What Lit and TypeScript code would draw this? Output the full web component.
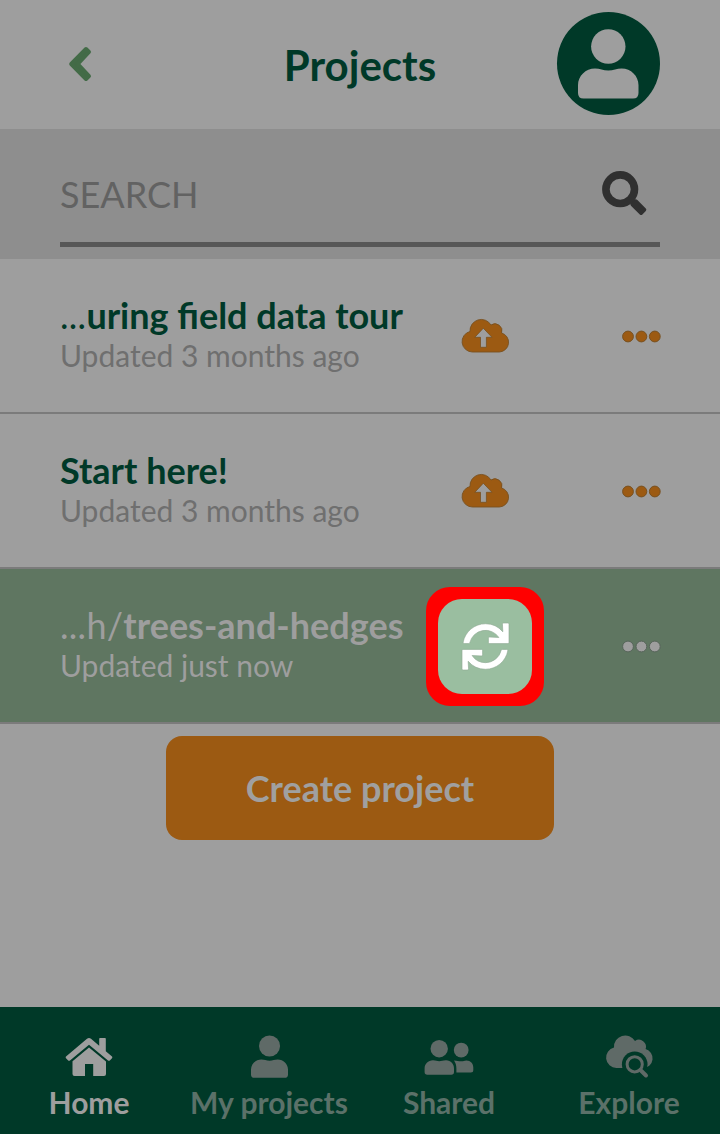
import { LitElement, html, css, svg, nothing } from "lit";
import { customElement } from "lit/decorators.js";
import { classMap } from "lit/directives/class-map.js";

interface Project {
  lead: string;
  name: string;
  updated: string;
  syncing: boolean;
}

const projects: Project[] = [
  { lead: "...", name: "uring field data tour", updated: "Updated 3 months ago", syncing: false },
  { lead: "", name: "Start here!", updated: "Updated 3 months ago", syncing: false },
  { lead: "...h/", name: "trees-and-hedges", updated: "Updated just now", syncing: true },
];

const cloud =
  "M10.4 33A10.4 10.4 0 0 1 8 12.5A11.3 11.3 0 0 1 29 6A7 7 0 0 1 39.6 14A9.7 9.7 0 0 1 37.4 33Z";

const person = svg`
  <circle cx="30.3" cy="17.5" r="17.2"></circle>
  <path d="M17 39.5C22 39.5 25 41.5 30.3 41.5S38.6 39.5 43.6 39.5C53 39.5 60.5 47 60.5 56V64Q60.5 69.5 55 69.5H5.5Q0 69.5 0 64V56C0 47 7.6 39.5 17 39.5Z"></path>`;

@customElement("app-root")
export class AppRoot extends LitElement {
  static styles = css`
    :host {
      display: flex;
      flex-direction: column;
      width: 720px;
      height: 1134px;
      overflow: hidden;
      background: #9e9e9e;
      color: #003928;
      font-family: Lato, sans-serif;
    }
    * { box-sizing: border-box; }
    svg { display: block; overflow: visible; }
    button { border: 0; padding: 0; background: none; font: inherit; color: inherit; }
    header {
      height: 129px;
      padding: 0 60px;
      display: grid;
      grid-template-columns: 104px 1fr 104px;
      align-items: center;
    }
    .back { padding: 0 0 1px 9px; color: #436b47; justify-self: start; }
    h1 { margin: 0; padding-top: 1px; text-align: center; font-size: 42px; line-height: 50px; font-weight: 700; }
    .avatar {
      width: 103px; height: 103px; border-radius: 50%;
      background: #003928; color: #9e9e9e;
      display: grid; place-items: center;
      margin-top: -2px; justify-self: end;
    }
    .search { height: 130px; background: #8e8e8e; padding: 0 60px; }
    .field {
      height: 118px; border-bottom: 5px solid #575757;
      display: flex; justify-content: space-between; align-items: center;
      padding: 16px 13px 0 0;
      color: #626262; font-size: 36px; line-height: 44px;
    }
    .field svg { color: #303030; }
    .row {
      height: 155px; border-bottom: 2px solid #7b7b7b;
      padding: 1px 59px 0 60px;
      display: grid; grid-template-columns: 366px 118px 1fr; align-items: center;
    }
    .row.active { background: #5f7661; color: #9e9e9e; }
    .text { padding-bottom: 6px; }
    .name { font-size: 36px; line-height: 44px; white-space: nowrap; }
    .lead { letter-spacing: 0.3px; }
    .updated { font-size: 30px; line-height: 36px; color: #6f6f6f; }
    .active .updated { color: #9e9e9e; }
    .state { display: grid; place-items: center; height: 119px; padding-bottom: 2px; }
    .state.marked { padding: 0; border: 12px solid #f00; border-radius: 24px; background: #f00; }
    .tile {
      width: 94px; height: 95px; border-radius: 24px; background: #9abea0; color: #fff;
      display: grid; place-items: center;
    }
    .more { justify-self: end; }
    .create {
      align-self: center; margin-top: 12px; width: 388px; height: 104px;
      border-radius: 16px; background: #9c5a12; color: #a0a0a0;
      font-size: 36px; font-weight: 700; line-height: 44px; padding: 0 0 1px 0;
    }
    nav {
      margin-top: auto; height: 127px; background: #003928; color: #5b7169;
      display: grid; grid-template-columns: 178px 182px 178px 182px;
    }
    .item { display: flex; flex-direction: column; align-items: center; font-size: 30px; font-weight: 700; line-height: 36px; }
    .glyph { height: 77px; width: 50px; display: flex; align-items: flex-end; justify-content: center; color: #5f6a67; padding-bottom: 6px; }
    .item.on, .item.on .glyph { color: #9e9e9e; }
    .item.on .glyph { padding-bottom: 8px; }
    .glyph svg { flex: none; }
  `;

  private uploadIcon() {
    return html`<svg width="47" height="33" viewBox="0 0 47 33">
      <path d=${cloud} fill="#9c5a12" stroke="#78501f" stroke-width=".9"></path>
      <path d="M21.3 9.2L30 18.3H24.4V28.3H18.5V18.3H12.8Z" fill="#9e9e9e" stroke="#78501f" stroke-width=".8"></path>
    </svg>`;
  }

  private syncIcon() {
    return html`<svg width="47" height="47" viewBox="0 0 512 512" fill="currentColor" stroke="#90aa94" stroke-width="7">
      <path d="M440.65 12.57l4 82.77A247.16 247.16 0 0 0 255.83 8C134.73 8 33.91 94.92 12.29 209.82A12 12 0 0 0 24.09 224h49.05a12 12 0 0 0 11.67-9.26 175.91 175.91 0 0 1 317-56.94l-101.46-4.86a12 12 0 0 0-12.57 12v47.41a12 12 0 0 0 12 12H500a12 12 0 0 0 12-12V12a12 12 0 0 0-12-12h-47.37a12 12 0 0 0-11.98 12.57z"></path>
      <path d="M255.83 432a175.61 175.61 0 0 1-146-77.8l101.8 4.87a12 12 0 0 0 12.57-12v-47.4a12 12 0 0 0-12-12H12a12 12 0 0 0-12 12V500a12 12 0 0 0 12 12h47.35a12 12 0 0 0 12-12.6l-4.15-82.57A247.17 247.17 0 0 0 255.83 504c121.11 0 221.93-86.92 243.55-201.82a12 12 0 0 0-11.8-14.18h-49.05a12 12 0 0 0-11.67 9.26A175.86 175.86 0 0 1 255.83 432z"></path>
    </svg>`;
  }

  private row(p: Project) {
    const fill = p.syncing ? "#9e9e9e" : "#9c5a12";
    const edge = p.syncing ? "#566459" : "#78501f";
    return html`<section class=${classMap({ row: true, active: p.syncing })}>
      <div class="text">
        <div class="name">${p.lead ? html`<span class="lead">${p.lead}</span>` : nothing}<b>${p.name}</b></div>
        <div class="updated">${p.updated}</div>
      </div>
      <div class=${classMap({ state: true, marked: p.syncing })}>
        ${p.syncing ? html`<div class="tile">${this.syncIcon()}</div>` : this.uploadIcon()}
      </div>
      <button class="more" aria-label="More">
        <svg width="39" height="13" viewBox="0 0 39 13" fill=${fill} stroke=${edge}>
          <circle cx="6" cy="6.5" r="5.4"></circle>
          <circle cx="19.4" cy="6.5" r="5.4"></circle>
          <circle cx="32.8" cy="6.5" r="5.4"></circle>
        </svg>
      </button>
    </section>`;
  }

  render() {
    return html`
      <header>
        <button class="back" aria-label="Back">
          <svg width="22" height="34" viewBox="0 0 22 34" fill="currentColor" stroke="currentColor" stroke-width="4" stroke-linejoin="round">
            <path d="M17 2L20 5L8.8 17L20 29L17 32L2.2 17Z"></path>
          </svg>
        </button>
        <h1>Projects</h1>
        <div class="avatar"><svg width="60.5" height="69.5" viewBox="0 0 60.5 69.5" fill="currentColor">${person}</svg></div>
      </header>
      <div class="search">
        <div class="field">
          <span>SEARCH</span>
          <svg width="45" height="45" viewBox="0 0 45 45" fill="none" stroke="currentColor">
            <circle cx="18.2" cy="18.2" r="14.3" stroke-width="7.6"></circle>
            <path fill="currentColor" stroke="none" d="M28.6 32.6L32.6 28.6Q34 27.6 35.4 29L43.8 37.4Q45 38.8 43.8 40L40.4 43.6Q39.2 44.6 37.8 43.6L29.2 35Q27.8 33.8 28.6 32.6Z"></path>
          </svg>
        </div>
      </div>
      ${projects.map((p) => this.row(p))}
      <button class="create">Create project</button>
      <nav>
        <div class="item on">
          <div class="glyph"><svg width="48" height="38" viewBox="0 0 48 38" fill="currentColor">
            <path d="M24 0Q25 0 26 .8L34.2 7.7V.8Q34.2 0 35 0H40Q40.8 0 40.8 .8V13.2L47 18.5Q47.8 19.2 47 20.2L44.8 22.5Q44 23.2 43 22.5L24 6.7L5 22.5Q4 23.2 3.2 22.5L1 20.2Q.2 19.2 1 18.5L22 .8Q23 0 24 0Z"></path>
            <path d="M24 9.5L41 23.6V36Q41 38 39 38H28.2V26H20V38H9.5Q7.5 38 7.5 36V23.3Z"></path>
          </svg></div>
          Home
        </div>
        <div class="item">
          <div class="glyph"><svg width="37" height="43" viewBox="0 0 60.5 69.5" fill="currentColor">${person}</svg></div>
          My projects
        </div>
        <div class="item">
          <div class="glyph"><svg width="50" height="38" viewBox="0 0 50 38" fill="currentColor">
            <circle cx="15.2" cy="8.7" r="8.7"></circle>
            <circle cx="37.2" cy="10.1" r="7.4"></circle>
            <path d="M9 20.3C12 20.3 13 21.3 15.2 21.3S19 20.3 22 20.3C27 20.3 30 24 30 28.5V32Q30 34.7 27.3 34.7H3.3Q.6 34.7 .6 32V28.5C.6 24 4 20.3 9 20.3Z"></path>
            <path d="M30 20.4C33 20.4 34.5 21.2 37.2 21.2S40 20.4 42.5 20.4C46.5 20.4 49.3 23.5 49.3 27.5V30Q49.3 32.5 46.8 32.5H32.4V28.5C32.4 25 31.5 22.5 30 20.4Z"></path>
          </svg></div>
          Shared
        </div>
        <div class="item">
          <div class="glyph"><svg width="47" height="43" viewBox="0 0 47 43">
            <path d=${cloud} fill="currentColor"></path>
            <circle cx="28.7" cy="29.3" r="12.8" fill="#003928"></circle>
            <path d="M34 33H48V43H34Z" fill="#003928"></path>
            <circle cx="28.7" cy="29.3" r="7.6" fill="none" stroke="currentColor" stroke-width="3"></circle>
            <path d="M34.4 35L40 40.5" stroke="currentColor" stroke-width="4" stroke-linecap="round"></path>
          </svg></div>
          Explore
        </div>
      </nav>
    `;
  }
}
